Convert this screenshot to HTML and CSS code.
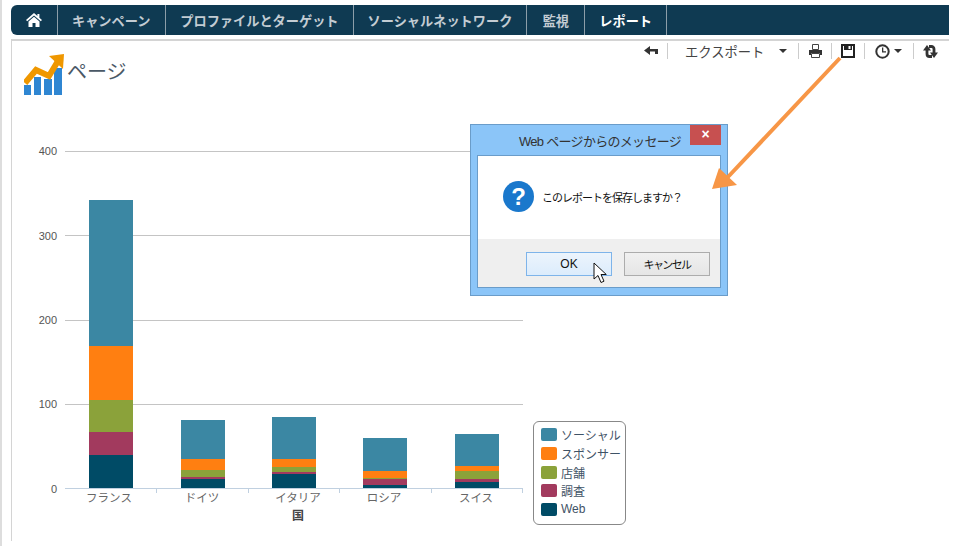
FILE: index.html
```html
<!DOCTYPE html>
<html lang="ja">
<head>
  <meta charset="UTF-8" />
  <title>ページ</title>
  <link rel="stylesheet" href="styles.css">
</head>
<body>
  <div class="shell">
    <nav class="tabs">
      <a class="tab tab-home" href="#">
        <svg width="16" height="14" viewBox="0 0 16 14"><path d="M8 0 0 7l1.200 1.300L8 2.400l6.800 5.900L16 7l-2.600-2.300V1h-2v1.900zM8 3.800 2.500 8.600V14h4v-4h3v4h4V8.600z" fill="#fff"/></svg>
      </a>
      <a class="tab tab-first" href="#">キャンペーン</a>
      <a class="tab" href="#">プロファイルとターゲット</a>
      <a class="tab" href="#">ソーシャルネットワーク</a>
      <a class="tab tab-short" href="#">監視</a>
      <a class="tab tab-active" href="#">レポート</a>
    </nav>

    <main class="panel">
      <div class="toolbar">
        <span class="tool tool-back">
          <svg width="14" height="10" viewBox="0 0 14 10"><path d="M6 0v3h8v5H11V5.500H6V9L0 4.500z" fill="#333"/></svg>
        </span>
        <span class="tool tool-export">エクスポート<i class="caret caret-export"></i></span>
        <span class="tool">
          <svg width="13" height="14" viewBox="0 0 13 14"><path d="M3.500.500h6v5h-6z" fill="#fff" stroke="#444"/><path d="M0 6h13v5h-2V9H2v2H0z" fill="#333"/><path d="M2.500 9.500h8v4h-8z" fill="#fff" stroke="#444"/></svg>
        </span>
        <span class="tool">
          <svg width="14" height="14" viewBox="0 0 14 14"><path d="M1 1h12v12H1z" fill="#fff" stroke="#222" stroke-width="2"/><path d="M3 1h8v5H3z" fill="#222"/><path d="M7.500 2h2v3h-2z" fill="#fff"/></svg>
        </span>
        <span class="tool tool-clock">
          <svg width="15" height="15" viewBox="0 0 15 15"><circle cx="7.500" cy="7.500" r="6.200" fill="#fff" stroke="#333" stroke-width="2"/><path d="M7 3.500h1.300v3.700H11v1.300H7z" fill="#333"/></svg>
          <i class="caret"></i>
        </span>
        <span class="tool tool-last">
          <svg width="15" height="13" viewBox="0 0 15 13"><path d="M4 5v4a2.500 2.500 0 0 0 2.500 2.500H9" fill="none" stroke="#333" stroke-width="2.800"/><path d="M0 5.500h8L4 0z" fill="#333"/><path d="M11 8V4a2.500 2.500 0 0 0-2.500-2.500H6" fill="none" stroke="#333" stroke-width="2.800"/><path d="M7 7.500h8L11 13z" fill="#333"/></svg>
        </span>
      </div>

      <h1 class="page-title">
        <svg width="40" height="41" viewBox="0 0 40 41">
          <path d="M0 31h7v10H0zM10 23h7v18h-7zM20 25h8v16h-8zM30 14h8v27h-8z" fill="#2f86d2"/>
          <path d="M1 29 12 16 25 22 34 7" fill="none" stroke="#ef9700" stroke-width="6"/>
          <path d="M25 2 40 0 39 15z" fill="#ef9700"/>
        </svg>
        <span>ページ</span>
      </h1>

      <svg class="chart" width="530" height="404" viewBox="0 0 530 404">
        <g class="grid">
          <path d="M54 18.500h458M54 102.500h458M54 187.500h458M54 271.500h458"/>
        </g>
        <g class="axis-labels">
          <text x="46" y="22">400</text>
          <text x="46" y="107">300</text>
          <text x="46" y="191">200</text>
          <text x="46" y="275">100</text>
          <text x="46" y="360">0</text>
        </g>
        <g>
          <rect class="s-social" x="78" y="67" width="44" height="146"/>
          <rect class="s-sponsor" x="78" y="213" width="44" height="54"/>
          <rect class="s-shop" x="78" y="267" width="44" height="32"/>
          <rect class="s-survey" x="78" y="299" width="44" height="23"/>
          <rect class="s-web" x="78" y="322" width="44" height="33"/>

          <rect class="s-social" x="170" y="287" width="44" height="39"/>
          <rect class="s-sponsor" x="170" y="326" width="44" height="11"/>
          <rect class="s-shop" x="170" y="337" width="44" height="7"/>
          <rect class="s-survey" x="170" y="344" width="44" height="2"/>
          <rect class="s-web" x="170" y="346" width="44" height="9"/>

          <rect class="s-social" x="261" y="284" width="44" height="42"/>
          <rect class="s-sponsor" x="261" y="326" width="44" height="8"/>
          <rect class="s-shop" x="261" y="334" width="44" height="5"/>
          <rect class="s-survey" x="261" y="339" width="44" height="2"/>
          <rect class="s-web" x="261" y="341" width="44" height="14"/>

          <rect class="s-social" x="352" y="305" width="44" height="33"/>
          <rect class="s-sponsor" x="352" y="338" width="44" height="7"/>
          <rect class="s-shop" x="352" y="345" width="44" height="1"/>
          <rect class="s-survey" x="352" y="346" width="44" height="6"/>
          <rect class="s-web" x="352" y="352" width="44" height="3"/>

          <rect class="s-social" x="444" y="301" width="44" height="32"/>
          <rect class="s-sponsor" x="444" y="333" width="44" height="5"/>
          <rect class="s-shop" x="444" y="338" width="44" height="8"/>
          <rect class="s-survey" x="444" y="346" width="44" height="3"/>
          <rect class="s-web" x="444" y="349" width="44" height="6"/>
        </g>
        <path class="axis" d="M54 355.500h458M145.500 355v5M237.500 355v5M328.500 355v5M420.500 355v5M511.500 355v5"/>
        <g class="cat-labels">
          <text x="98" y="369">フランス</text>
          <text x="191" y="369">ドイツ</text>
          <text x="287" y="369">イタリア</text>
          <text x="373" y="369">ロシア</text>
          <text x="465" y="369">スイス</text>
          <text class="axis-title" x="287" y="387">国</text>
        </g>
      </svg>

      <ul class="legend">
        <li><i class="swatch sw-social"></i>ソーシャル</li>
        <li><i class="swatch sw-sponsor"></i>スポンサー</li>
        <li><i class="swatch sw-shop"></i>店舗</li>
        <li><i class="swatch sw-survey"></i>調査</li>
        <li><i class="swatch sw-web"></i>Web</li>
      </ul>
    </main>
  </div>

  <div class="dialog">
    <div class="dialog-head">
      <span class="dialog-title">Web ページからのメッセージ</span>
      <span class="dialog-close">×</span>
    </div>
    <div class="dialog-body">
      <div class="dialog-msg">
        <span class="dialog-icon">?</span>
        <span class="dialog-text">このレポートを保存しますか？</span>
      </div>
      <div class="dialog-foot">
        <button class="btn btn-ok">OK</button>
        <button class="btn btn-cancel">キャンセル</button>
      </div>
    </div>
  </div>

  <svg class="callout" width="140" height="145" viewBox="0 0 140 145">
    <path d="M130 4 17 124" stroke="#f79646" stroke-width="4" fill="none"/>
    <path d="M2 135 9 114 27 131z" fill="#f79646"/>
  </svg>

  <svg class="cursor" width="14" height="22" viewBox="0 0 14 22"><path d="M1 1v16l4-3.500 3 7 3-1.300-3-6.700h5.300z" fill="#fff" stroke="#111"/></svg>
</body>
</html>
```

FILE: styles.css
```css
body {
  margin: 0;
  font-family: "Liberation Sans", "Noto Sans CJK JP", sans-serif;
  background: #fff;
  color: #333;
}
.shell {
  width: 938px;
  height: 541px;
  padding: 5px 0 0 9px;
  border-left: 2px solid #ddd;
}
.tabs {
  display: flex;
  height: 30px;
  background: #0f3a52;
  border-radius: 6px 0 0 6px;
}
.tab {
  display: flex;
  align-items: center;
  padding: 0 14px;
  font-size: 13.200px;
  font-weight: bold;
  color: #c3ccd3;
  text-decoration: none;
  border-right: 1px solid #8c9ea9;
}
.tab-home {
  width: 47px;
  box-sizing: border-box;
  justify-content: center;
  padding: 0;
}
.tab-first {
  padding-right: 14.800px;
}
.tab-short {
  padding: 0 15.300px;
}
.tab-active {
  color: #fff;
}
.panel {
  position: relative;
  height: 500px;
  margin-top: 4px;
  border-top: 2px solid #d4d4d4;
  border-left: 1px solid #d4d4d4;
}
.toolbar {
  display: flex;
  justify-content: flex-end;
  align-items: center;
  height: 16px;
  padding: 2px 1px 0 0;
  font-size: 13.300px;
}
.tool {
  display: flex;
  align-items: center;
  justify-content: center;
  width: 33px;
  height: 16px;
  box-sizing: border-box;
  border-right: 1px solid #ccc;
}
.tool-back {
  width: 34px;
}
.tool-export {
  width: 131px;
  justify-content: flex-start;
  padding-left: 17px;
  color: #444;
}
.tool-clock {
  width: 49px;
  gap: 4px;
  padding-right: 1px;
}
.tool-last {
  width: 34px;
  padding-right: 2px;
  border-right: 0;
}
.caret {
  display: block;
  border: 4px solid transparent;
  border-top-color: #333;
  border-bottom: 0;
}
.caret-export {
  margin-left: 15px;
}
.page-title {
  display: flex;
  align-items: flex-start;
  gap: 3px;
  margin: -5px 0 0 12px;
  font-size: 20px;
  font-weight: normal;
  color: #4a5866;
  height: 42px;
}
.page-title span {
  margin-top: 2px;
}
.chart {
  display: block;
  margin: 37px 0 0 -1px;
}
.grid path {
  stroke: #c4c4c4;
  fill: none;
}
.axis {
  stroke: #c0d0e0;
  fill: none;
}
.axis-labels text {
  font-size: 11px;
  fill: #555;
  text-anchor: end;
}
.cat-labels text {
  font-size: 11.500px;
  fill: #666;
  text-anchor: middle;
}
.cat-labels .axis-title {
  font-size: 12px;
  font-weight: bold;
  fill: #444;
}
.s-social { fill: #3b87a3; }
.s-sponsor { fill: #ff7f11; }
.s-shop { fill: #8ba23a; }
.s-survey { fill: #a23a5e; }
.s-web { fill: #004b66; }
.legend {
  position: absolute;
  left: 521px;
  top: 380px;
  width: 91px;
  height: 102px;
  margin: 0;
  padding: 0;
  list-style: none;
  border: 1px solid #888;
  border-radius: 6px;
  display: flex;
  flex-direction: column;
  justify-content: center;
}
.legend li {
  display: flex;
  align-items: center;
  gap: 4px;
  box-sizing: border-box;
  height: 18.600px;
  padding: 0 0 2px 7px;
  font-size: 12px;
  color: #3f5366;
  white-space: nowrap;
}
.swatch {
  width: 16px;
  height: 13px;
  border-radius: 2px;
}
.sw-social { background: #3b87a3; }
.sw-sponsor { background: #ff7f11; }
.sw-shop { background: #8ba23a; }
.sw-survey { background: #a23a5e; }
.sw-web { background: #004b66; }
.callout {
  position: absolute;
  left: 710px;
  top: 54px;
}
.dialog {
  position: absolute;
  left: 470px;
  top: 124px;
  width: 258px;
  height: 172px;
  box-sizing: border-box;
  padding: 0 6px 7px;
  background: #8bc5f8;
  border: 1px solid #6a9cc9;
  display: flex;
  flex-direction: column;
}
.dialog-head {
  position: relative;
  height: 30px;
  flex: none;
  display: flex;
  align-items: center;
  justify-content: center;
}
.dialog-title {
  margin-left: 2px;
  font-size: 13px;
  letter-spacing: -0.700px;
  color: #333;
}
.dialog-close {
  position: absolute;
  right: 0;
  top: 0;
  width: 31px;
  height: 20px;
  background: #c75050;
  color: #fff;
  font-size: 14px;
  font-weight: bold;
  line-height: 18px;
  text-align: center;
}
.dialog-body {
  flex: 1;
  display: flex;
  flex-direction: column;
  border: 1px solid #6a9cc9;
  background: #fff;
}
.dialog-msg {
  flex: 1;
  display: flex;
  align-items: center;
  gap: 8px;
  padding: 0 0 2px 25px;
  color: #111;
}
.dialog-text {
  font-size: 11px;
  letter-spacing: -1px;
}
.dialog-icon {
  width: 31px;
  height: 31px;
  border-radius: 50%;
  background: #1a78cc;
  color: #fff;
  font-size: 24px;
  font-weight: bold;
  line-height: 31px;
  text-align: center;
}
.dialog-foot {
  height: 48px;
  flex: none;
  box-sizing: border-box;
  display: flex;
  justify-content: flex-end;
  gap: 12px;
  padding: 13px 10px 0 0;
  background: #efefef;
}
.btn {
  width: 86px;
  height: 24px;
  padding: 0;
  font: 12px "Liberation Sans", "Noto Sans CJK JP", sans-serif;
  color: #111;
  background: linear-gradient(#f0f0f0, #e5e5e5);
  border: 1px solid #acacac;
}
.btn-ok {
  background: linear-gradient(#ecf4fc, #dcecfc);
  border-color: #7eb4ea;
}
.btn-cancel {
  font-size: 11px;
  letter-spacing: -1.600px;
}
.cursor {
  position: absolute;
  left: 593px;
  top: 262px;
}
```
